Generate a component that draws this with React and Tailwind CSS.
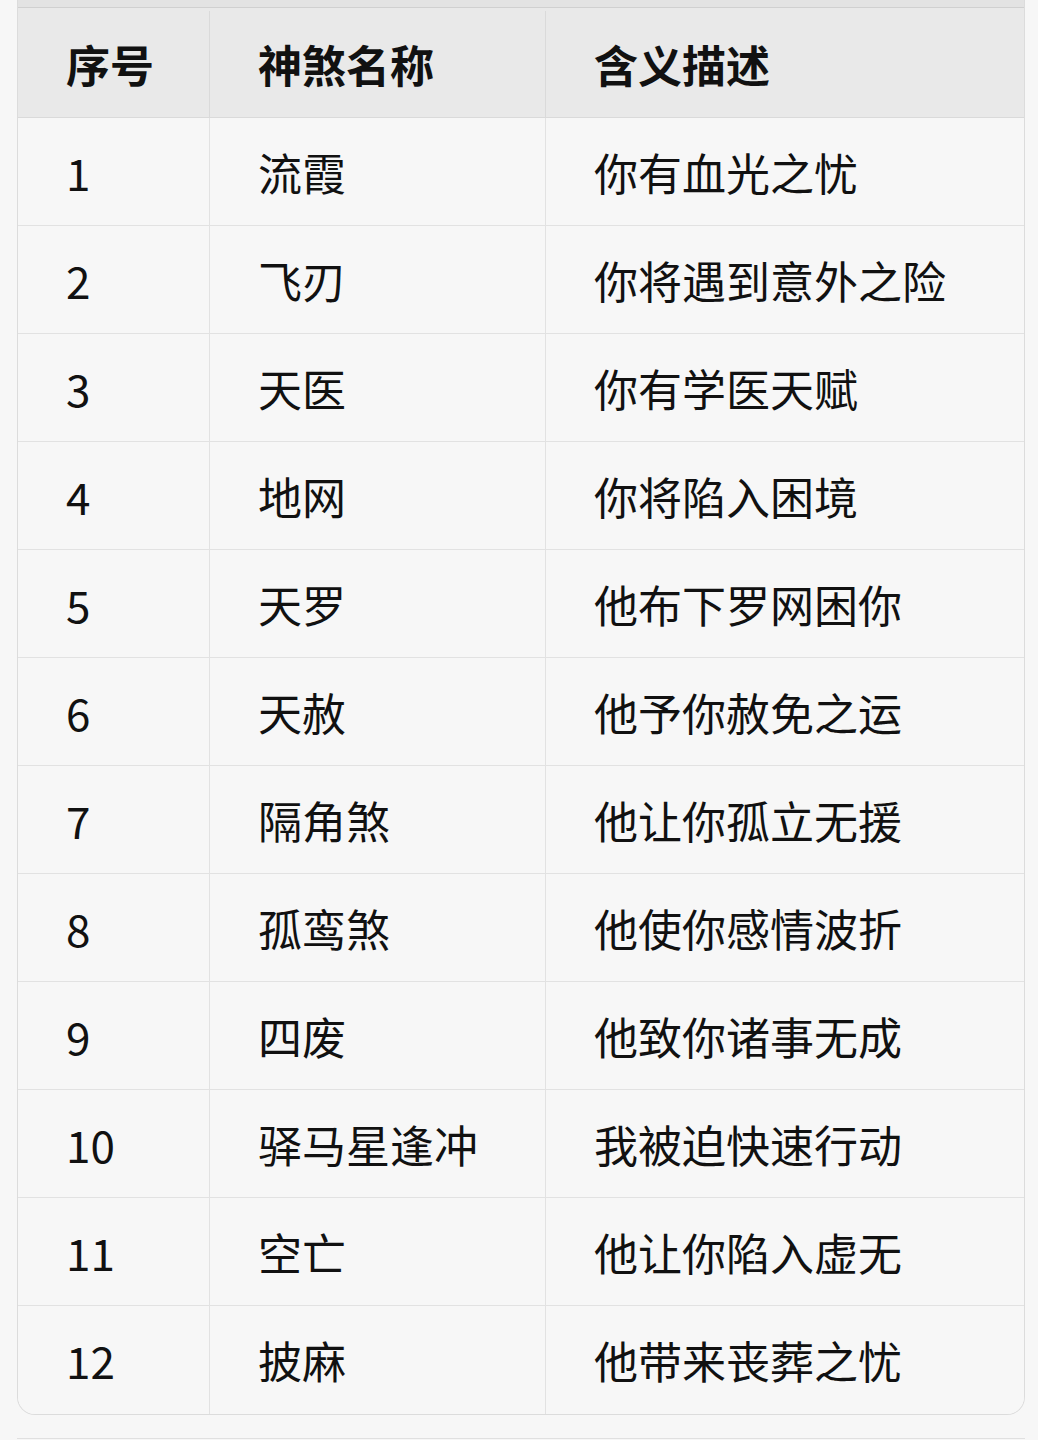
import React from "react";

const rows = [
  ["1", "流霞", "你有血光之忧"],
  ["2", "飞刃", "你将遇到意外之险"],
  ["3", "天医", "你有学医天赋"],
  ["4", "地网", "你将陷入困境"],
  ["5", "天罗", "他布下罗网困你"],
  ["6", "天赦", "他予你赦免之运"],
  ["7", "隔角煞", "他让你孤立无援"],
  ["8", "孤鸾煞", "他使你感情波折"],
  ["9", "四废", "他致你诸事无成"],
  ["10", "驿马星逢冲", "我被迫快速行动"],
  ["11", "空亡", "他让你陷入虚无"],
  ["12", "披麻", "他带来丧葬之忧"],
];

export default function App() {
  return (
    <div
      className="min-h-[1440px] w-[1038px] bg-[#f7f7f7] text-[#111111]"
      style={{ fontFamily: '"Noto Sans CJK SC", "Noto Sans", sans-serif' }}
    >
      <div className="ml-[17px] w-[1008px] border-x border-b border-[#dcdcdc] rounded-b-[18px] overflow-hidden">
        <div className="h-[8px] bg-[#e3e3e3] border-b border-[#d0d0d0]" />
        <div className="flex h-[110px] bg-[#e9e9e9] border-b border-[#dadada] text-[44px] font-bold pt-[3px]">
          <div className="w-[192px] border-r border-[#dadada] pl-12 flex items-center">序号</div>
          <div className="w-[336px] border-r border-[#dadada] pl-12 flex items-center">神煞名称</div>
          <div className="flex-1 pl-12 flex items-center">含义描述</div>
        </div>
        {rows.map((r, i) => (
          <div
            key={r[0]}
            className={
              "flex h-[108px] bg-[#f7f7f7] text-[44px] " +
              (i < rows.length - 1 ? "border-b border-[#e2e2e2]" : "")
            }
          >
            <div className="w-[192px] border-r border-[#e2e2e2] pl-12 flex items-center">{r[0]}</div>
            <div className="w-[336px] border-r border-[#e2e2e2] pl-12 flex items-center">{r[1]}</div>
            <div className="flex-1 pl-12 flex items-center">{r[2]}</div>
          </div>
        ))}
      </div>
      <div className="mt-[23px] ml-[17px] w-[1008px] h-[10px] border-t border-[#e0e0e0]" />
    </div>
  );
}
